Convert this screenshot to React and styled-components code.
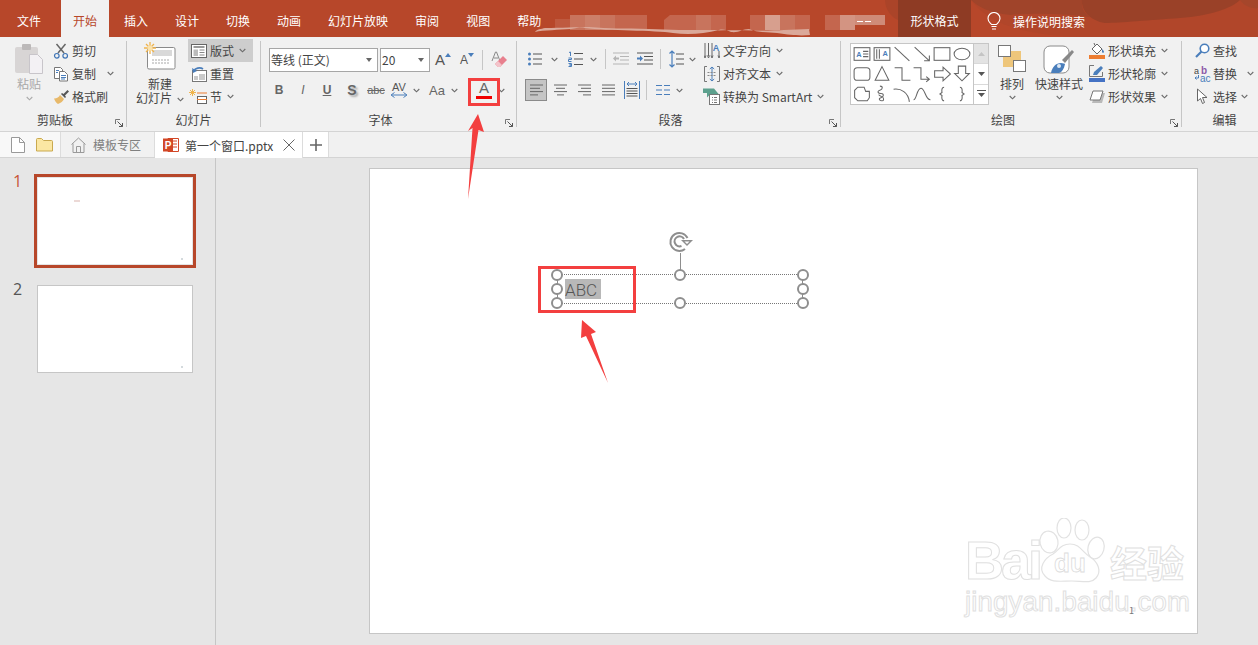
import React from "react";
import styled, { createGlobalStyle } from "styled-components";

const GlobalStyle = createGlobalStyle`
  html, body {
    margin: 0;
    padding: 0;
    background: #e6e6e6;
  }
  * {
    box-sizing: border-box;
  }
`;

const BLUE = "#4a7ebb";

const Chevron = ({ color = "#6b6b6b" }) => (
  <svg width="7" height="5" viewBox="0 0 7 5">
    <path d="M.7 1 3.5 3.8 6.3 1" fill="none" stroke={color} strokeWidth="1.1" />
  </svg>
);

const TitleArt = () => (
  <TitleBg viewBox="0 0 1258 37" width="1258" height="37">
    <path d="M885 0h13v20c-7-3-13-11-13-20z" fill="#ab4429" />
    <path d="M971 0h287v37H1085c-40 0-75-8-92-18-10-6-17-12-22-19z" fill="#a5442a" opacity=".35" />
    <path d="M971 0h111c-1 8 3 14 8 17-30-4-60-4-80-2-20-2-32-8-39-15z" fill="#a0442a" />
    <path d="M1082 0h158c-8 8-30 16-60 18-30 2-60 5-75 5-14-2-24-12-23-23z" fill="#9a4128" />
    <path d="M1240 0h18v8c-6 1-14-2-18-8z" fill="#a5462b" />
    <g fill="#c4664e">
      <rect x="555" y="19" width="15" height="9" fill="#bf5a40" />
      <rect x="570" y="15" width="15" height="15" fill="#c8745d" />
      <rect x="585" y="15" width="15" height="15" fill="#cc7f69" />
      <rect x="600" y="15" width="15" height="15" fill="#c8745d" />
      <rect x="615" y="15" width="32" height="15" />
      <path d="M664 20l6-5h26v15h-32z" />
      <rect x="696" y="15" width="15" height="15" fill="#c8745d" />
      <rect x="711" y="15" width="15" height="15" />
      <rect x="750" y="15" width="15" height="15" />
      <rect x="765" y="15" width="15" height="15" fill="#d79f8e" />
      <rect x="780" y="15" width="15" height="15" fill="#c8745d" />
      <rect x="795" y="15" width="15" height="15" />
      <rect x="825" y="15" width="15" height="15" />
      <rect x="840" y="15" width="15" height="15" fill="#d39482" />
      <rect x="855" y="15" width="30" height="10" fill="#cf8b78" />
    </g>
    <path d="M535 32c8-2 25-2 36-3 6-1 10-2 14-1 22 3 70 2 88 5 15 2 30 1 46-3 4-1 8 0 12 2 8 1 11-3 18-3 8 4 20 3 28 4 14 2 22 3 33 2l-1-6-25 1c-20 1-60 0-75 0-20 0-40 0-60-1-25-1-40 0-60-2-12 0-28 1-44 1-4 1-8 1-10 4z" fill="#dba99a" />
    <rect x="857" y="21" width="6" height="1" fill="#fff" />
    <rect x="865" y="21" width="6" height="1" fill="#fff" />
  </TitleBg>
);

const PasteIcon = () => (
  <svg width="30" height="32" viewBox="0 0 30 32">
    <rect x="1" y="4" width="23" height="26" rx="2" fill="#d8d5d5" />
    <rect x="8" y="1" width="9" height="6" rx="1" fill="#bcb9b9" />
    <path d="M15.5 11.5h8l5 5v14h-13z" fill="#f3f1f4" stroke="#c8c5ca" />
  </svg>
);

const CutIcon = () => (
  <svg width="16" height="16" viewBox="0 0 16 16">
    <path d="M5 10 12.5 1M11 10 3.5 1" stroke="#666" strokeWidth="1.5" fill="none" />
    <circle cx="3.8" cy="12.8" r="2.3" fill="none" stroke="#3f74b5" strokeWidth="1.2" />
    <circle cx="12.2" cy="12.8" r="2.3" fill="none" stroke="#3f74b5" strokeWidth="1.2" />
  </svg>
);

const CopyIcon = () => (
  <svg width="16" height="16" viewBox="0 0 16 16">
    <path d="M1.5 1.5h6l2 2v9h-8z" fill="#fff" stroke="#777" />
    <path d="M6.5 5.5h5l3 3v6.5h-8z" fill="#fff" stroke="#777" />
    <path d="M3 4.5h3M3 6.500h2M8 9.500h5M8 11.500h5M8 13h4" stroke={BLUE} />
  </svg>
);

const BrushIcon = () => (
  <svg width="17" height="16" viewBox="0 0 17 16">
    <path d="M1 9.500c3 0 5-1.500 6-3.500l4 4c-1 2-3 4-6 5-2-1-3-3-4-5.500z" fill="#e8b96a" />
    <path d="M8 5l4 4 1-1-1-1.500L16 2.500 14.500 1 10.500 5 9 4z" fill="#555" />
  </svg>
);

const NewSlideIcon = () => (
  <svg width="32" height="28" viewBox="0 0 32 28">
    <rect x="3.500" y="5.500" width="27.500" height="21.500" rx="1.500" fill="#fff" stroke="#8a8a8a" />
    <rect x="8" y="8" width="20" height="6" fill="#d9d9d9" />
    <path d="M8 18h18M8 21h18" stroke="#a8a8a8" strokeDasharray="2 1" />
    <g stroke="#f0b44c" strokeWidth="1.300">
      <path d="M6 0v12M0 6h12M2 2l8 8M10 2l-8 8" />
    </g>
    <circle cx="6" cy="6" r="2.600" fill="#fbe3ad" />
  </svg>
);

const LayoutIcon = () => (
  <svg width="16" height="14" viewBox="0 0 16 14">
    <rect x=".5" y=".5" width="15" height="13" fill="#fff" stroke="#666" />
    <path d="M2.500 3h11" stroke="#777" strokeWidth="1.500" />
    <rect x="2.500" y="5.500" width="4.500" height="6.500" fill="#bbb" />
    <path d="M8.500 6h5M8.500 8.500h5M8.500 11h5" stroke="#888" />
  </svg>
);

const ResetIcon = () => (
  <svg width="16" height="16" viewBox="0 0 16 16">
    <rect x="1.500" y="4.500" width="14" height="11" fill="#fff" stroke="#777" />
    <rect x="8" y="8" width="6" height="6" fill="#c9c9c9" />
    <rect x="3" y="10" width="4" height="4" fill="#c9c9c9" />
    <path d="M3 5c1-3 6-4 9-2" stroke={BLUE} strokeWidth="1.800" fill="none" />
    <path d="M1 2l1 5 4-2z" fill={BLUE} />
  </svg>
);

const SectionIcon = () => (
  <svg width="20" height="16" viewBox="0 0 20 16">
    <g stroke="#f0b44c">
      <path d="M3.500 0v7M0 3.500h7M1 1l5 5M6 1 1 6" />
    </g>
    <path d="M8 3.500h10v1H8z" fill="#ed7d31" />
    <rect x="8.500" y="7.500" width="9" height="7" fill="#fff" stroke="#666" />
    <path d="M8 10.500h10" stroke="#ed7d31" />
  </svg>
);

const GrowFontIcon = ({ size, arrow }) => (
  <FontGlyph $size={size}>
    A
    <svg width="6" height="4" viewBox="0 0 6 4">
      <path d={arrow === "up" ? "M3 0 6 4H0z" : "M0 0h6L3 4z"} fill={BLUE} />
    </svg>
  </FontGlyph>
);

const EraserIcon = () => (
  <svg width="18" height="18" viewBox="0 0 18 18">
    <path d="M2 10 5.500 1h1L10 10" stroke="#888" fill="none" />
    <path d="M4 7h4" stroke="#888" />
    <path d="M5 13l8-8 4 4-7 7H8z" fill="#e8808e" />
    <path d="M5 13l3 3h2l2-2-4-4z" fill="#f3c3ca" />
  </svg>
);

const SpacingIcon = () => (
  <svg width="18" height="16" viewBox="0 0 18 16">
    <text x="9" y="9" textAnchor="middle" fontFamily="Liberation Sans" fontSize="11" fill="#555">AV</text>
    <path d="M2 13h14" stroke={BLUE} />
    <path d="M4.500 10.500 1 13l3.500 2.500M13.500 10.500 17 13l-3.500 2.500" stroke={BLUE} fill="none" />
  </svg>
);

const BulletsIcon = () => (
  <svg width="14" height="14" viewBox="0 0 14 14">
    <path d="M5 2h9M5 7h9M5 12h9" stroke="#555" />
    <g fill={BLUE}>
      <circle cx="1.500" cy="2" r="1.500" />
      <circle cx="1.500" cy="7" r="1.500" />
      <circle cx="1.500" cy="12" r="1.500" />
    </g>
  </svg>
);

const NumbersIcon = () => (
  <svg width="15" height="16" viewBox="0 0 15 16">
    <path d="M6 2.500h9M6 8h9M6 13.500h9" stroke="#555" />
    <path d="M1 1.500 2.500 1v4M.5 7h3v1.500h-3v2h3M.5 12.500h3V14h-2 2v1.500h-3" stroke={BLUE} fill="none" />
  </svg>
);

const IndentIcon = ({ dim }) => (
  <svg width="16" height="14" viewBox="0 0 16 14">
    <path d="M0 1h16M7 4.500h9M7 8h9M0 12h16" stroke={dim ? "#b5b5b5" : "#555"} />
    {dim ? (
      <path d="M0 6.500 3 3.500v2h3v2H3v2z" fill="#b5b5b5" />
    ) : (
      <path d="M6 6.500 3 3.500v2H0v2h3v2z" fill={BLUE} />
    )}
  </svg>
);

const LineSpacingIcon = () => (
  <svg width="15" height="18" viewBox="0 0 15 18">
    <path d="M7 4h8M7 9h8M7 14h8" stroke="#555" />
    <path d="M3 1v16M.5 3.500 3 1l2.500 2.500M.5 14.500 3 17l2.500-2.500" stroke={BLUE} strokeWidth="1.200" fill="none" />
  </svg>
);

const AlignIcon = ({ lines }) => (
  <svg width="15" height="12" viewBox="0 0 15 12">
    {lines.map(([x1, x2], i) => (
      <path key={i} d={`M${x1} ${1 + i * 3.3}H${x2}`} stroke="#666" />
    ))}
  </svg>
);

const DistributedIcon = () => (
  <svg width="16" height="18" viewBox="0 0 16 18">
    <path d="M.5 0v18M15.500 0v18" stroke={BLUE} />
    <path d="M3 3h10M5 1 3 3l2 2M11 1l2 2-2 2" stroke={BLUE} fill="none" />
    <path d="M2.500 7.500h11M2.500 10h11M2.500 12.500h11M2.500 15h11" stroke="#555" />
  </svg>
);

const ColumnsIcon = () => (
  <svg width="14" height="12" viewBox="0 0 14 12">
    <path d="M0 1.500h6M8 1.500h6M0 6h6M8 6h6M0 10.500h6M8 10.500h6" stroke={BLUE} strokeWidth="1.200" />
  </svg>
);

const TextDirIcon = () => (
  <svg width="16" height="16" viewBox="0 0 16 16">
    <path d="M1 0v13M4.500 0v13M8 0v13M15 8v5" stroke="#666" />
    <path d="M0 12.500 1 15l1-2.500M3.500 12.500l1 2.500 1-2.500M7 12.500 8 15l1-2.500M14 12.500l1 2.500 1-2.500" stroke="#666" fill="none" />
    <text x="12" y="7.500" textAnchor="middle" fontFamily="Liberation Sans" fontSize="9" fontWeight="700" fill={BLUE}>A</text>
  </svg>
);

const AlignTextIcon = () => (
  <svg width="16" height="16" viewBox="0 0 16 16">
    <path d="M3 .5H.5v15H3M13 .5h2.500v15H13" stroke="#777" fill="none" />
    <path d="M8 1v14M5.800 3 8 1l2.200 2M5.800 13 8 15l2.200-2" stroke={BLUE} fill="none" />
    <path d="M3.500 6.500h9M3.500 9.500h9" stroke="#888" strokeDasharray="2 1" />
  </svg>
);

const SmartArtIcon = () => (
  <svg width="18" height="17" viewBox="0 0 18 17">
    <path d="M0 .500h11l5 6H7l-3 3V5H0z" fill="#5ca08d" />
    <rect x="6.500" y="6.500" width="10" height="10" fill="#fff" stroke="#777" />
    <path d="M9 9.500h1M11 9.500h3M9 12h1M11 12h3M9 14.500h1M11 14.500h3" stroke="#777" />
  </svg>
);

const ArrangeIcon = () => (
  <svg width="28" height="28" viewBox="0 0 28 28">
    <rect x="5" y="6" width="18" height="16" fill="#eec67b" />
    <rect x=".500" y=".500" width="12" height="11" fill="#fff" stroke="#777" />
    <rect x="15.500" y="15.500" width="12" height="11" fill="#fff" stroke="#777" />
  </svg>
);

const QuickStyleIcon = () => (
  <svg width="32" height="32" viewBox="0 0 32 32">
    <rect x="1" y="1" width="25" height="27" rx="6" fill="#fff" stroke="#8a8a8a" />
    <path d="M19 15 29 5l2 2-9 11z" fill="#888" />
    <path d="M8 28c1-6 5-10 10-10 2 0 4 1 4 1-1 5-3 8-6 9z" fill={BLUE} />
    <circle cx="16" cy="21" r="2" fill="#dfe9f4" />
  </svg>
);

const FillIcon = () => (
  <svg width="17" height="17" viewBox="0 0 17 17">
    <path d="M3 7 8 2l5 5-5 5z" fill="#fff" stroke="#666" />
    <path d="M6 3.500 5 1" stroke="#666" />
    <path d="M13 7c1 1 2 2 2 3s-2 1-2 0z" fill={BLUE} />
    <rect y="13" width="16" height="4" fill="#ed7d31" />
  </svg>
);

const OutlineIcon = () => (
  <svg width="17" height="17" viewBox="0 0 17 17">
    <path d="M5 .500H.5v11h13V7" fill="none" stroke="#777" />
    <path d="M4 10l1-3 7-6 2 2-6 7z" fill={BLUE} />
    <rect y="13" width="16" height="4" fill="#4472c4" />
  </svg>
);

const EffectIcon = () => (
  <svg width="17" height="16" viewBox="0 0 17 16">
    <path d="M5 3h10l-3 10H2z" fill="#b9b9b9" transform="translate(1 1)" />
    <path d="M4 2h10l-3 9H1z" fill="#fff" stroke="#777" />
  </svg>
);

const FindIcon = () => (
  <svg width="15" height="15" viewBox="0 0 15 15">
    <circle cx="9.500" cy="5.500" r="4.300" fill="#fff" stroke={BLUE} strokeWidth="1.600" />
    <path d="M6.500 8.500 1 14" stroke={BLUE} strokeWidth="2.200" />
  </svg>
);

const ReplaceIcon = () => (
  <svg width="17" height="16" viewBox="0 0 17 16">
    <text x="0" y="7.500" fontFamily="Liberation Sans" fontSize="9" fill="#444">a</text>
    <text x="7" y="7.500" fontFamily="Liberation Sans" fontSize="10" fontWeight="700" fill="#8c5aa8">b</text>
    <text x="6" y="15.500" fontFamily="Liberation Sans" fontSize="10" fill={BLUE}>ac</text>
    <path d="M4.500 9v3H1M2.500 10.500 1 12l1.500 1.500" stroke={BLUE} fill="none" />
  </svg>
);

const SelectIcon = () => (
  <svg width="13" height="17" viewBox="0 0 13 17">
    <path d="M1.500 1v12l3-2.500 2 5 2-1-2-5h4.500z" fill="#fff" stroke="#666" />
  </svg>
);

const LauncherIcon = () => (
  <svg width="8" height="8" viewBox="0 0 8 8">
    <path d="M.5 5V.5H5" stroke="#777" fill="none" />
    <path d="M2.500 2.500l5 5M7.500 4v3.500H4" stroke="#555" fill="none" />
  </svg>
);

const BulbIcon = () => (
  <svg width="14" height="19" viewBox="0 0 14 19">
    <path d="M4.500 12.500C3 10.500 1 9.500 1 6.500a6 6 0 0 1 12 0c0 3-2 4-3.500 6z" fill="none" stroke="#fff" strokeWidth="1.100" />
    <path d="M4.500 14.500h5M5 17h4" stroke="#fff" strokeWidth="1.200" />
  </svg>
);

const NewFileIcon = () => (
  <svg width="14" height="16" viewBox="0 0 14 16">
    <path d="M.5.500h8l5 5v10H.500z" fill="#fff" stroke="#999" />
    <path d="M8.500.500v5h5" fill="none" stroke="#999" />
  </svg>
);

const FolderIcon = () => (
  <svg width="17" height="14" viewBox="0 0 17 14">
    <path d="M.5 13V1.500a1 1 0 0 1 1-1h4l2 2h8a1 1 0 0 1 1 1V13z" fill="#fbe7a3" stroke="#c9a94f" />
  </svg>
);

const HomeIcon = () => (
  <svg width="15" height="16" viewBox="0 0 15 16">
    <path d="M.5 7.500 7.500 1l7 6.500M2 6.500v9h11v-9M5.500 15.500V9.500h4v6" fill="none" stroke="#999" />
  </svg>
);

const PptIcon = () => (
  <svg width="16" height="16" viewBox="0 0 16 16">
    <path d="M5 1.500h10.500v13H5z" fill="#fff" stroke="#d24726" />
    <path d="M10 4h4M10 7h4M10 10h4" stroke="#d24726" />
    <rect y="1.500" width="10" height="13" fill="#d24726" />
    <text x="5" y="12" textAnchor="middle" fontFamily="Liberation Sans" fontSize="10" fontWeight="700" fill="#fff">P</text>
  </svg>
);

const CloseIcon = () => (
  <svg width="12" height="12" viewBox="0 0 12 12">
    <path d="M.5.500l11 11M11.500.500l-11 11" stroke="#666" />
  </svg>
);

const PlusIcon = () => (
  <svg width="12" height="12" viewBox="0 0 12 12">
    <path d="M6 0v12M0 6h12" stroke="#666" strokeWidth="1.600" />
  </svg>
);

const RotateIcon = () => (
  <svg width="26" height="22" viewBox="0 0 26 22">
    <path d="M19.500 7A9 9 0 1 0 17 18" fill="none" stroke="#8e8e8e" strokeWidth="2" />
    <path d="M16 8A5 5 0 1 0 13.500 15" fill="none" stroke="#8e8e8e" strokeWidth="2" />
    <path d="M13 9h12l-6 6z" fill="#8e8e8e" />
    <path d="M16.500 10.500h5L19 13z" fill="#fff" />
  </svg>
);

const ArrowOverlay = () => (
  <Overlay viewBox="0 0 1258 645" width="1258" height="645">
    <polygon points="478,114 484,132 478.500,130 468,199 472.500,128 468,131" fill="#f33f3f" />
    <polygon points="582,320 596,332 591,334 608,383 586,336 581,338" fill="#f33f3f" />
  </Overlay>
);

const S = ({ d, ...rest }) => <path d={d} fill="none" stroke="#666" {...rest} />;

const galleryShapes = [
  <g key="tb">
    <rect x="1.500" y="3.500" width="15" height="12" fill="none" stroke="#666" />
    <text x="6" y="12" textAnchor="middle" fontFamily="Liberation Sans" fontSize="7" fontWeight="700" fill={BLUE}>A</text>
    <S d="M10 7h5M10 9.500h5M10 12h5" />
  </g>,
  <g key="vb">
    <rect x="1.500" y="3.500" width="15" height="12" fill="none" stroke="#666" />
    <S d="M4 5v9M6.500 5v9" />
    <text x="12" y="11" textAnchor="middle" fontFamily="Liberation Sans" fontSize="7" fontWeight="700" fill={BLUE}>A</text>
  </g>,
  <S key="ln" d="M2 3l14 13" />,
  <S key="ar" d="M2 3l14 13M11 16h5v-5" />,
  <rect key="rc" x="1.500" y="3.500" width="15" height="12" fill="none" stroke="#666" />,
  <ellipse key="el" cx="9" cy="9.500" rx="7.500" ry="5.500" fill="none" stroke="#666" />,
  <rect key="rr" x="1.500" y="3.500" width="15" height="12" rx="3" fill="none" stroke="#666" />,
  <S key="tr" d="M9 2.500l6.500 13h-13z" />,
  <S key="el1" d="M2 3.500h7v12h8" />,
  <S key="el2" d="M1 3.500h7v11h8M13 12l3 2.500-3 2.500" />,
  <S key="ra" d="M2 6.500h8V3l7 6.500-7 6.500v-3.500H2z" />,
  <S key="da" d="M5.500 2h7v7H16l-7 7-7-7h3.500z" />,
  <S key="fr" d="M5 3h6l1.500 4H16v6l-2 3H5l-3-3V6z" />,
  <S key="sc" d="M7 2c3 0 3 3 0 4s-2 3 1 3 3 3 0 4-1 3 1 3 2-3 0-4-3-1-3-2" />,
  <S key="cv" d="M1 5c7-1 14 3 15 12" />,
  <S key="wv" d="M1 15C4 15 4 4 8 4s4 11 9 11" />,
  <S key="lb" d="M11 3c-3 0-2 5-2 5l-2 1.500 2 1.500s-1 5 2 5" />,
  <S key="rb" d="M7 3c3 0 2 5 2 5l2 1.500-2 1.500s1 5-2 5" />,
];

export default function App() {
  return (
    <Page>
      <GlobalStyle />
      <TitleBar>
        <TitleArt />
        <MenuTab $first>文件</MenuTab>
        <MenuTab $active>开始</MenuTab>
        <MenuTab>插入</MenuTab>
        <MenuTab>设计</MenuTab>
        <MenuTab>切换</MenuTab>
        <MenuTab>动画</MenuTab>
        <MenuTab>幻灯片放映</MenuTab>
        <MenuTab>审阅</MenuTab>
        <MenuTab>视图</MenuTab>
        <MenuTab>帮助</MenuTab>
        <ContextTab>形状格式</ContextTab>
        <SearchHint>
          <BulbIcon />
          操作说明搜索
        </SearchHint>
      </TitleBar>

      <Ribbon>
        <Group $width={127}>
          <GroupBody $left={11}>
            <BigButton $width={36} $disabled>
              <BigIcon $pad={4}>
                <PasteIcon />
              </BigIcon>
              粘贴
              <Chevron color="#aaa" />
            </BigButton>
            <Stack $left={6}>
              <SmallButton>
                <IconSlot><CutIcon /></IconSlot>剪切
              </SmallButton>
              <SmallButton>
                <IconSlot><CopyIcon /></IconSlot>复制
                <CaretGap $gap={8}><Chevron /></CaretGap>
              </SmallButton>
              <SmallButton>
                <IconSlot><BrushIcon /></IconSlot>格式刷
              </SmallButton>
            </Stack>
          </GroupBody>
          <GroupLabel $launcher>剪贴板</GroupLabel>
          <Launcher><LauncherIcon /></Launcher>
        </Group>

        <Group $width={134}>
          <GroupBody $left={8}>
            <BigButton $width={50}>
              <BigIcon $pad={3}>
                <NewSlideIcon />
              </BigIcon>
              新建
              <span>
                幻灯片
                <CaretGap $gap={5}><Chevron /></CaretGap>
              </span>
            </BigButton>
            <Stack $left={3}>
              <SmallButton $selected $width={65}>
                <IconSlot><LayoutIcon /></IconSlot>版式
                <CaretGap $gap={2}><Chevron /></CaretGap>
              </SmallButton>
              <SmallButton $width={65}>
                <IconSlot><ResetIcon /></IconSlot>重置
              </SmallButton>
              <SmallButton $width={65}>
                <IconSlot><SectionIcon /></IconSlot>节
                <CaretGap $gap={2}><Chevron /></CaretGap>
              </SmallButton>
            </Stack>
          </GroupBody>
          <GroupLabel>幻灯片</GroupLabel>
        </Group>

        <Group $width={256}>
          <GroupBody $left={8}>
            <ToolColumn>
              <ToolRow $top={9}>
                <Combo $width={109}>
                  等线 (正文)
                  <ComboCaret />
                </Combo>
                <Combo $width={50} $left={2}>
                  20
                  <ComboCaret />
                </Combo>
                <Cell $w={26}><GrowFontIcon size={15} arrow="up" /></Cell>
                <Cell $w={22}><GrowFontIcon size={12} arrow="down" /></Cell>
                <Divider $left={4} />
                <Cell $w={32}><EraserIcon /></Cell>
              </ToolRow>
              <ToolRow $top={6} $left={-2}>
                <Cell $w={24}><StyleGlyph $bold>B</StyleGlyph></Cell>
                <Cell $w={24}><StyleGlyph $italic>I</StyleGlyph></Cell>
                <Cell $w={24}><StyleGlyph $bold $underline>U</StyleGlyph></Cell>
                <Cell $w={24} $left={1}><StyleGlyph $bold $shadow>S</StyleGlyph></Cell>
                <Cell $w={24}><StrikeGlyph>abc</StrikeGlyph></Cell>
                <Cell $w={22}><SpacingIcon /></Cell>
                <Cell $w={12}><Chevron /></Cell>
                <Cell $w={20} $left={5}><CaseGlyph>Aa</CaseGlyph></Cell>
                <Cell $w={13} $left={1}><Chevron /></Cell>
                <Cell $w={28} $left={9}><ColorGlyph>A<ColorBar /></ColorGlyph></Cell>
                <Cell $w={7}><Chevron /></Cell>
              </ToolRow>
            </ToolColumn>
          </GroupBody>
          <GroupLabel $launcher>字体</GroupLabel>
          <Launcher><LauncherIcon /></Launcher>
        </Group>

        <Group $width={324}>
          <GroupBody $left={8}>
            <ToolColumn $width={179}>
              <ToolRow $top={8}>
                <Cell $w={20}><BulletsIcon /></Cell>
                <Cell $w={18}><Chevron /></Cell>
                <Cell $w={20} $left={2}><NumbersIcon /></Cell>
                <Cell $w={16}><Chevron /></Cell>
                <Divider $left={4} />
                <Cell $w={20} $left={5}><IndentIcon dim /></Cell>
                <Cell $w={20} $left={4}><IndentIcon /></Cell>
                <Divider $left={5} />
                <Cell $w={20} $left={5}><LineSpacingIcon /></Cell>
                <Cell $w={12}><Chevron /></Cell>
              </ToolRow>
              <ToolRow $top={7}>
                <Cell $w={22} $pressed>
                  <AlignIcon lines={[[1, 14], [1, 11], [1, 14], [1, 9]]} />
                </Cell>
                <Cell $w={22} $left={2}>
                  <AlignIcon lines={[[1, 14], [3, 12], [1, 14], [4, 11]]} />
                </Cell>
                <Cell $w={22} $left={2}>
                  <AlignIcon lines={[[1, 14], [4, 14], [1, 14], [6, 14]]} />
                </Cell>
                <Cell $w={22} $left={2}>
                  <AlignIcon lines={[[1, 14], [1, 14], [1, 14], [1, 14]]} />
                </Cell>
                <Cell $w={22} $left={2}><DistributedIcon /></Cell>
                <Divider $left={3} />
                <Cell $w={20} $left={6}><ColumnsIcon /></Cell>
                <Cell $w={12}><Chevron /></Cell>
              </ToolRow>
            </ToolColumn>
            <Stack>
              <SmallButton $gap={3}>
                <IconSlot><TextDirIcon /></IconSlot>文字方向
                <CaretGap $gap={2}><Chevron /></CaretGap>
              </SmallButton>
              <SmallButton $gap={3}>
                <IconSlot><AlignTextIcon /></IconSlot>对齐文本
                <CaretGap $gap={2}><Chevron /></CaretGap>
              </SmallButton>
              <SmallButton $gap={3}>
                <IconSlot><SmartArtIcon /></IconSlot>转换为 SmartArt
                <CaretGap $gap={2}><Chevron /></CaretGap>
              </SmallButton>
            </Stack>
          </GroupBody>
          <GroupLabel $launcher>段落</GroupLabel>
          <Launcher><LauncherIcon /></Launcher>
        </Group>

        <Group $width={341}>
          <GroupBody $left={8}>
            <Gallery>
              <ShapeGrid>
                {galleryShapes.map((shape) => (
                  <ShapeCell key={shape.key} viewBox="0 0 18 19">
                    {shape}
                  </ShapeCell>
                ))}
              </ShapeGrid>
              <GalleryScroll>
                <ScrollCell $muted>
                  <svg width="7" height="4" viewBox="0 0 7 4"><path d="M3.500 0 7 4H0z" fill="#c4c4c4" /></svg>
                </ScrollCell>
                <ScrollCell>
                  <svg width="7" height="4" viewBox="0 0 7 4"><path d="M0 0h7L3.500 4z" fill="#555" /></svg>
                </ScrollCell>
                <ScrollCell>
                  <svg width="9" height="8" viewBox="0 0 9 8"><path d="M0 .500h9" stroke="#555" /><path d="M1 3h7L4.500 7z" fill="#555" /></svg>
                </ScrollCell>
              </GalleryScroll>
            </Gallery>
            <BigButton $width={40} $left={3}>
              <BigIcon $pad={6}>
                <ArrangeIcon />
              </BigIcon>
              排列
              <BigCaret><Chevron /></BigCaret>
            </BigButton>
            <BigButton $width={50} $left={2}>
              <BigIcon $pad={6}>
                <QuickStyleIcon />
              </BigIcon>
              快速样式
              <BigCaret><Chevron /></BigCaret>
            </BigButton>
            <Stack $left={5}>
              <SmallButton $gap={3}>
                <IconSlot><FillIcon /></IconSlot>形状填充
                <CaretGap $gap={2}><Chevron /></CaretGap>
              </SmallButton>
              <SmallButton $gap={3}>
                <IconSlot><OutlineIcon /></IconSlot>形状轮廓
                <CaretGap $gap={2}><Chevron /></CaretGap>
              </SmallButton>
              <SmallButton $gap={3}>
                <IconSlot><EffectIcon /></IconSlot>形状效果
                <CaretGap $gap={2}><Chevron /></CaretGap>
              </SmallButton>
            </Stack>
          </GroupBody>
          <GroupLabel $launcher>绘图</GroupLabel>
          <Launcher><LauncherIcon /></Launcher>
        </Group>

        <Group $width={76} $last>
          <GroupBody $left={12}>
            <Stack>
              <SmallButton $gap={3}>
                <IconSlot><FindIcon /></IconSlot>查找
              </SmallButton>
              <SmallButton $gap={3}>
                <IconSlot><ReplaceIcon /></IconSlot>替换
                <CaretGap $gap={7}><Chevron /></CaretGap>
              </SmallButton>
              <SmallButton $gap={3}>
                <IconSlot><SelectIcon /></IconSlot>选择
                <CaretGap $gap={1}><Chevron /></CaretGap>
              </SmallButton>
            </Stack>
          </GroupBody>
          <GroupLabel $offset={10}>编辑</GroupLabel>
        </Group>
      </Ribbon>

      <DocTabs>
        <QuickFiles>
          <NewFileIcon />
          <FolderIcon />
        </QuickFiles>
        <DocTab $width={94} $padding={10} $gap={7}>
          <HomeIcon />
          <DocTitle $muted>模板专区</DocTitle>
        </DocTab>
        <DocTab $width={148} $padding={8} $gap={6} $active>
          <PptIcon />
          <DocTitle>第一个窗口.pptx</DocTitle>
          <CloseSlot><CloseIcon /></CloseSlot>
        </DocTab>
        <AddTab><PlusIcon /></AddTab>
      </DocTabs>

      <Workspace>
        <ThumbPane>
          <ThumbRow>
            <ThumbNumber $current>1</ThumbNumber>
            <Thumb $current>
              <ThumbText />
              <ThumbDot />
            </Thumb>
          </ThumbRow>
          <ThumbRow>
            <ThumbNumber>2</ThumbNumber>
            <Thumb>
              <ThumbDot />
            </Thumb>
          </ThumbRow>
        </ThumbPane>
        <Stage>
          <Slide>
            <RotateHandle><RotateIcon /></RotateHandle>
            <RotateStem />
            <Selection>
              <SelectedText>ABC</SelectedText>
              <SideTick $side="left" />
              <SideTick $side="right" />
              <Handle $x="0%" $y="0%" />
              <Handle $x="50%" $y="0%" />
              <Handle $x="100%" $y="0%" />
              <Handle $x="0%" $y="50%" />
              <Handle $x="100%" $y="50%" />
              <Handle $x="0%" $y="100%" />
              <Handle $x="50%" $y="100%" />
              <Handle $x="100%" $y="100%" />
            </Selection>
            <Watermark>
              <WatermarkLogo>
                <WatermarkBai>Bai</WatermarkBai>
                <PawMark width="70" height="68" viewBox="0 0 70 68">
                  <g fill="#fff" stroke="#e2e2e2" strokeWidth="1.200">
                    <ellipse cx="12" cy="24" rx="9" ry="11" transform="rotate(-12 12 24)" />
                    <ellipse cx="27" cy="10" rx="7" ry="10" />
                    <ellipse cx="45" cy="12" rx="7" ry="10" />
                    <ellipse cx="59" cy="30" rx="8" ry="11" transform="rotate(15 59 30)" />
                    <path d="M8 58c-8-8 0-18 8-22 6-4 8-10 17-10 10 0 12 8 20 13 8 5 12 14 6 21-5 6-14 3-24 3-12 0-21 2-27-5z" />
                  </g>
                  <text x="33" y="54" textAnchor="middle" fontFamily="Liberation Sans" fontWeight="700" fontSize="26" fill="#fff" stroke="#dcdcdc" strokeWidth=".8">du</text>
                </PawMark>
                <WatermarkCn>经验</WatermarkCn>
              </WatermarkLogo>
              <WatermarkUrl>jingyan.baidu.com</WatermarkUrl>
            </Watermark>
            <PageNumber>1</PageNumber>
          </Slide>
        </Stage>
      </Workspace>

      <RedBox $x={468} $y={78} $w={32} $h={28} />
      <RedBox $x={538} $y={266} $w={98} $h={47} />
      <ArrowOverlay />
    </Page>
  );
}

const Page = styled.div`
  position: relative;
  width: 1258px;
  height: 645px;
  overflow: hidden;
  font-family: "Noto Sans CJK SC", "Liberation Sans", sans-serif;
  font-size: 12px;
  color: #444;
`;

const TitleBar = styled.header`
  position: relative;
  display: flex;
  height: 37px;
  background: #b7472a;
  color: #fff;
  padding-left: 3.5px;
`;

const TitleBg = styled.svg`
  position: absolute;
  left: 0;
  top: 0;
`;

const MenuTab = styled.div`
  position: relative;
  padding: 7px 13.5px 0;
  height: 37px;
  line-height: 28px;
  margin-left: ${(p) => (p.$active ? "6.5px" : "0")};
  ${(p) =>
    p.$active &&
    `
    padding: 7px 12px 0;
    margin-right: 1.5px;
    background: #f1f1f1;
    color: #b7472a;
  `}
`;

const ContextTab = styled.div`
  position: absolute;
  left: 898px;
  top: 0;
  width: 73px;
  height: 37px;
  background: #8e3b24;
  padding-top: 7px;
  line-height: 28px;
  text-align: center;
`;

const SearchHint = styled.div`
  position: absolute;
  left: 987px;
  top: 7px;
  display: flex;
  align-items: center;
  gap: 12px;
  height: 28px;
`;

const Ribbon = styled.section`
  display: flex;
  height: 95px;
  background: #f1f1f1;
  border-bottom: 1px solid #d4d4d4;
`;

const Group = styled.div`
  position: relative;
  flex: none;
  width: ${(p) => p.$width}px;
  height: 94px;
  padding-top: 2px;
  &::after {
    content: "";
    display: ${(p) => (p.$last ? "none" : "block")};
    position: absolute;
    right: 0;
    top: 4px;
    bottom: 4px;
    width: 1px;
    background: #c6c6c6;
  }
`;

const GroupBody = styled.div`
  display: flex;
  height: 70px;
  padding-left: ${(p) => p.$left}px;
`;

const GroupLabel = styled.div`
  height: 22px;
  line-height: 22px;
  text-align: center;
  padding-right: ${(p) => (p.$launcher ? 17 : 1)}px;
  padding-left: ${(p) => p.$offset || 0}px;
`;

const Launcher = styled.span`
  position: absolute;
  right: 4px;
  bottom: 4px;
  display: flex;
`;

const BigButton = styled.div`
  flex: none;
  display: flex;
  flex-direction: column;
  align-items: center;
  width: ${(p) => p.$width}px;
  margin-left: ${(p) => p.$left || 0}px;
  line-height: 14px;
  white-space: nowrap;
  color: ${(p) => (p.$disabled ? "#a9a9a9" : "#444")};
  & > svg {
    margin-top: 5px;
  }
`;

const BigIcon = styled.div`
  height: 38px;
  padding-top: ${(p) => p.$pad}px;
  display: flex;
  justify-content: center;
`;

const BigCaret = styled.span`
  display: flex;
  margin-top: 4px;
`;

const Stack = styled.div`
  display: flex;
  flex-direction: column;
  margin-left: ${(p) => p.$left || 0}px;
`;

const SmallButton = styled.div`
  display: flex;
  align-items: center;
  gap: ${(p) => p.$gap ?? 3}px;
  height: 23px;
  padding-left: ${(p) => (p.$width ? 3 : 0)}px;
  width: ${(p) => (p.$width ? `${p.$width}px` : "auto")};
  background: ${(p) => (p.$selected ? "#cdcdcd" : "transparent")};
  white-space: nowrap;
`;

const IconSlot = styled.span`
  flex: none;
  display: flex;
  align-items: center;
  justify-content: center;
  width: 16px;
  height: 18px;
  & > svg {
    flex: none;
  }
`;

const CaretGap = styled.span`
  display: inline-flex;
  vertical-align: middle;
  margin-left: ${(p) => p.$gap}px;
`;

const ToolColumn = styled.div`
  display: flex;
  flex-direction: column;
  flex: none;
  width: ${(p) => (p.$width ? `${p.$width}px` : "auto")};
`;

const ToolRow = styled.div`
  display: flex;
  align-items: center;
  height: 24px;
  margin-top: ${(p) => p.$top}px;
  margin-left: ${(p) => p.$left || 0}px;
`;

const Combo = styled.div`
  position: relative;
  flex: none;
  width: ${(p) => p.$width}px;
  margin-left: ${(p) => p.$left || 0}px;
  height: 24px;
  line-height: 22px;
  padding-left: 1px;
  background: #fff;
  border: 1px solid #a6a6a6;
`;

const ComboCaret = styled.span`
  position: absolute;
  right: 5px;
  top: 9px;
  border-top: 4px solid #666;
  border-left: 3px solid transparent;
  border-right: 3px solid transparent;
`;

const Cell = styled.span`
  flex: none;
  display: flex;
  align-items: center;
  justify-content: center;
  width: ${(p) => p.$w}px;
  margin-left: ${(p) => p.$left || 0}px;
  height: 22px;
  ${(p) => p.$pressed && "background: #c5c5c5; border: 1px solid #8a8a8a;"}
`;

const Divider = styled.span`
  flex: none;
  width: 1px;
  height: 20px;
  margin-left: ${(p) => p.$left}px;
  background: #c6c6c6;
`;

const FontGlyph = styled.span`
  display: flex;
  align-items: flex-start;
  font-family: "Liberation Sans", sans-serif;
  font-size: ${(p) => p.$size}px;
  line-height: 16px;
  color: #555;
  & > svg {
    margin-top: 1px;
  }
`;

const StyleGlyph = styled.span`
  font-family: "Liberation Sans", sans-serif;
  font-size: ${(p) => (p.$shadow ? 14 : 12)}px;
  font-weight: ${(p) => (p.$bold ? 700 : 400)};
  font-style: ${(p) => (p.$italic ? "italic" : "normal")};
  text-decoration: ${(p) => (p.$underline ? "underline" : "none")};
  text-shadow: ${(p) => (p.$shadow ? "2px 2px 2px #aaa" : "none")};
  color: #666;
`;

const StrikeGlyph = styled.span`
  font-family: "Liberation Sans", sans-serif;
  font-size: 11px;
  color: #666;
  text-decoration: line-through;
`;

const CaseGlyph = styled.span`
  font-family: "Liberation Sans", sans-serif;
  font-size: 13px;
  color: #666;
`;

const ColorGlyph = styled.span`
  display: flex;
  flex-direction: column;
  align-items: center;
  font-family: "Liberation Sans", sans-serif;
  font-size: 15px;
  line-height: 14px;
  color: #666;
`;

const ColorBar = styled.span`
  width: 16px;
  height: 3px;
  margin-top: 1px;
  background: #f00000;
`;

const Gallery = styled.div`
  flex: none;
  display: flex;
  width: 139px;
  height: 62px;
  margin-top: 4px;
  margin-left: 1px;
  background: #fff;
  border: 1px solid #c6c6c6;
`;

const ShapeGrid = styled.div`
  flex: none;
  display: grid;
  grid-template-columns: repeat(6, 20px);
  grid-template-rows: repeat(3, 20px);
  width: 122px;
  padding-left: 1px;
`;

const ShapeCell = styled.svg`
  width: 20px;
  height: 20px;
`;

const GalleryScroll = styled.div`
  flex: 1;
  display: flex;
  flex-direction: column;
  border-left: 1px solid #c6c6c6;
`;

const ScrollCell = styled.div`
  flex: 1;
  display: flex;
  align-items: center;
  justify-content: center;
  background: ${(p) => (p.$muted ? "#e3e3e3" : "#fff")};
  border-bottom: 1px solid #d9d9d9;
  &:last-child {
    border-bottom: 0;
  }
`;

const DocTabs = styled.nav`
  display: flex;
  height: 26px;
  background: #f1f1f1;
  border-bottom: 1px solid #d4d4d4;
`;

const QuickFiles = styled.div`
  flex: none;
  display: flex;
  align-items: center;
  gap: 11px;
  width: 61px;
  padding-left: 11px;
  background: #f8f8f8;
  border-right: 1px solid #dcdcdc;
`;

const DocTab = styled.div`
  flex: none;
  display: flex;
  align-items: center;
  gap: ${(p) => p.$gap}px;
  width: ${(p) => p.$width}px;
  padding-left: ${(p) => p.$padding}px;
  background: ${(p) => (p.$active ? "#fff" : "#f1f1f1")};
  border-right: 1px solid #dcdcdc;
  height: ${(p) => (p.$active ? "26px" : "25px")};
`;

const DocTitle = styled.span`
  color: ${(p) => (p.$muted ? "#808080" : "#444")};
  white-space: nowrap;
`;

const CloseSlot = styled.span`
  display: flex;
  margin-left: 4px;
`;

const AddTab = styled.div`
  flex: none;
  display: flex;
  align-items: center;
  justify-content: center;
  width: 26px;
  height: 25px;
  background: #fff;
  border-right: 1px solid #dcdcdc;
`;

const Workspace = styled.main`
  display: flex;
  height: 487px;
  background: #e6e6e6;
`;

const ThumbPane = styled.aside`
  flex: none;
  display: flex;
  flex-direction: column;
  gap: 14px;
  width: 216px;
  padding-top: 16px;
  border-right: 1px solid #c6c6c6;
`;

const ThumbRow = styled.div`
  display: flex;
`;

const ThumbNumber = styled.span`
  width: 34px;
  padding-left: 13px;
  font-family: "Open Sans", "Liberation Sans", sans-serif;
  font-size: 16px;
  line-height: 15px;
  color: ${(p) => (p.$current ? "#c8553a" : "#555")};
`;

const Thumb = styled.div`
  position: relative;
  width: 162px;
  height: 94px;
  background: #fff;
  border: 3px solid ${(p) => (p.$current ? "#b7472a" : "#e6e6e6")};
  box-shadow: inset 0 0 0 1px ${(p) => (p.$current ? "#e4e4e4" : "#c6c6c6")};
`;

const ThumbText = styled.span`
  position: absolute;
  left: 37px;
  top: 23px;
  width: 6px;
  height: 2px;
  background: #ecd9d6;
`;

const ThumbDot = styled.span`
  position: absolute;
  right: 10px;
  bottom: 5px;
  width: 2px;
  height: 2px;
  background: #d4dadd;
`;

const Stage = styled.div`
  flex: 1;
  padding: 10px 0 0 153px;
`;

const Slide = styled.div`
  position: relative;
  width: 829px;
  height: 466px;
  background: #fff;
  border: 1px solid #c6c6c6;
`;

const RotateHandle = styled.span`
  position: absolute;
  left: 298px;
  top: 62px;
  display: flex;
`;

const RotateStem = styled.span`
  position: absolute;
  left: 310px;
  top: 84px;
  width: 1px;
  height: 17px;
  background: #8e8e8e;
`;

const Selection = styled.div`
  position: absolute;
  left: 187px;
  top: 105px;
  width: 246px;
  height: 30px;
  border-top: 1px dotted #777;
  border-bottom: 1px dotted #777;
`;

const SelectedText = styled.span`
  position: absolute;
  left: 8px;
  top: 4px;
  width: 36px;
  height: 20px;
  background: #b8b8b8;
  color: #555;
  font-family: Roboto, "Liberation Sans", sans-serif;
  font-weight: 300;
  font-size: 17px;
  line-height: 22px;
`;

const SideTick = styled.span`
  position: absolute;
  top: 0;
  bottom: 0;
  width: 1px;
  background: #8c8c8c;
  ${(p) => (p.$side === "left" ? "left: 0;" : "right: 0;")}
`;

const Handle = styled.span`
  position: absolute;
  left: ${(p) => p.$x};
  top: ${(p) => p.$y};
  width: 12px;
  height: 12px;
  margin: -6px 0 0 -6px;
  background: #fff;
  border: 2px solid #8e8e8e;
  border-radius: 50%;
`;

const Watermark = styled.div`
  position: absolute;
  left: 595px;
  top: 353px;
  width: 232px;
`;

const WatermarkLogo = styled.div`
  display: flex;
  align-items: flex-end;
  height: 64px;
`;

const WatermarkBai = styled.span`
  font-family: "Liberation Sans", sans-serif;
  font-weight: 700;
  font-size: 54px;
  line-height: 52px;
  width: 76px;
  letter-spacing: -3px;
  color: #fff;
  -webkit-text-stroke: 1px #e0e0e0;
`;

const PawMark = styled.svg`
  flex: none;
  margin-left: -4px;
  margin-right: 4px;
`;

const WatermarkCn = styled.span`
  font-family: "Noto Sans CJK SC", sans-serif;
  font-weight: 700;
  font-size: 37px;
  line-height: 48px;
  margin-left: -1px;
  color: #fff;
  -webkit-text-stroke: 1px #e0e0e0;
  white-space: nowrap;
`;

const WatermarkUrl = styled.div`
  font-family: "Liberation Sans", sans-serif;
  font-size: 27.5px;
  line-height: 31px;
  white-space: nowrap;
  letter-spacing: 0.2px;
  color: #fff;
  -webkit-text-stroke: 1px #e0e0e0;
`;

const PageNumber = styled.span`
  position: absolute;
  left: 759px;
  top: 437px;
  font-size: 9px;
  line-height: 10px;
  color: #777;
`;

const RedBox = styled.div`
  position: absolute;
  left: ${(p) => p.$x}px;
  top: ${(p) => p.$y}px;
  width: ${(p) => p.$w}px;
  height: ${(p) => p.$h}px;
  border: 3px solid #f33f3f;
`;

const Overlay = styled.svg`
  position: absolute;
  left: 0;
  top: 0;
  pointer-events: none;
`;
